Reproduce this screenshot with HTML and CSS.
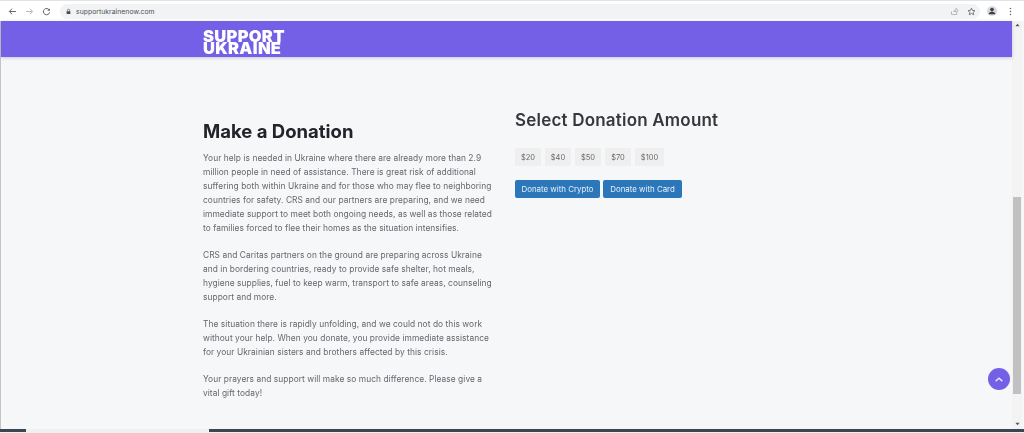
FILE: index.html
```html
<!DOCTYPE html>
<html lang="en">
<head>
<meta charset="utf-8">
<title>Support Ukraine</title>
<link rel="stylesheet" href="styles.css">
</head>
<body>
<div class="window">
  <header class="toolbar">
    <div class="nav-buttons">
      <svg class="tool-icon" viewBox="0 0 12 12"><path d="M10.500 6H2M5.500 2.300L1.800 6l3.700 3.700" fill="none" stroke="#5f6368" stroke-width="1.300"/></svg>
      <svg class="tool-icon" viewBox="0 0 12 12"><path d="M1.500 6H10M6.500 2.300L10.200 6 6.500 9.700" fill="none" stroke="#b4b6b9" stroke-width="1.300"/></svg>
      <svg class="tool-icon" viewBox="0 0 12 12"><path d="M9.800 4.200A4.200 4.200 0 1 0 10.200 7" fill="none" stroke="#5f6368" stroke-width="1.300"/><path d="M10.500 1.500v3.400H7.100z" fill="#5f6368"/></svg>
    </div>
    <div class="omnibox">
      <svg class="lock" viewBox="0 0 8 10"><path d="M1 4.500h6V9H1z" fill="#4a4d51"/><path d="M2.300 4.500V3a1.700 1.700 0 0 1 3.400 0v1.500" fill="none" stroke="#4a4d51" stroke-width="1"/></svg>
      <span class="url">supportukrainenow.com</span>
      <div class="omni-actions">
        <svg class="tool-icon" viewBox="0 0 12 12"><path d="M2 6v4h7V7M5 6.500C5.300 4.500 7 3.500 8 3.500V1.800L11 4.500 8 7V5.300C6.800 5.300 5.800 5.700 5 6.500z" fill="none" stroke="#a0a3a7" stroke-width="1"/></svg>
        <svg class="tool-icon" viewBox="0 0 12 12"><path d="M6 1.500l1.400 3 3.200.4-2.400 2.200.7 3.200L6 8.700l-2.900 1.600.7-3.200L1.400 4.900l3.200-.4z" fill="none" stroke="#5f6368" stroke-width="1.100"/></svg>
      </div>
    </div>
    <div class="profile">
      <svg class="avatar" viewBox="0 0 12 12"><circle cx="6" cy="6" r="6" fill="#d5d8de"/><circle cx="6" cy="4.300" r="2.200" fill="#3c4043"/><path d="M1.800 10c.6-2 2.200-3 4.200-3s3.600 1 4.200 3z" fill="#3c4043"/></svg>
      <svg class="dots" viewBox="0 0 4 12"><circle cx="2" cy="2" r="1" fill="#5f6368"/><circle cx="2" cy="6" r="1" fill="#5f6368"/><circle cx="2" cy="10" r="1" fill="#5f6368"/></svg>
    </div>
  </header>
  <div class="viewport">
    <main class="page">
      <nav class="brand-bar">
        <div class="logo"><span class="logo-line">SUPPORT</span><span class="logo-line">UKRAINE</span></div>
      </nav>
      <section class="content">
        <article class="story">
          <h1>Make a Donation</h1>
          <p>Your help is needed in Ukraine where there are already more than 2.9<br>million people in need of assistance. There is great risk of additional<br>suffering both within Ukraine and for those who may flee to neighboring<br>countries for safety. CRS and our partners are preparing, and we need<br>immediate support to meet both ongoing needs, as well as those related<br>to families forced to flee their homes as the situation intensifies.</p>
          <p>CRS and Caritas partners on the ground are preparing across Ukraine<br>and in bordering countries, ready to provide safe shelter, hot meals,<br>hygiene supplies, fuel to keep warm, transport to safe areas, counseling<br>support and more.</p>
          <p>The situation there is rapidly unfolding, and we could not do this work<br>without your help. When you donate, you provide immediate assistance<br>for your Ukrainian sisters and brothers affected by this crisis.</p>
          <p>Your prayers and support will make so much difference. Please give a<br>vital gift today!</p>
        </article>
        <aside class="donate">
          <h2>Select Donation Amount</h2>
          <div class="amounts">
            <button class="amount">$20</button>
            <button class="amount">$40</button>
            <button class="amount">$50</button>
            <button class="amount">$70</button>
            <button class="amount wide">$100</button>
          </div>
          <div class="actions">
            <button class="cta">Donate with Crypto</button>
            <button class="cta card">Donate with Card</button>
          </div>
        </aside>
      </section>
      <button class="to-top" aria-label="Back to top">
        <svg viewBox="0 0 12 8"><path d="M2 6l4-3.500L10 6" fill="none" stroke="#e6e2fb" stroke-width="1.800"/></svg>
      </button>
    </main>
    <div class="scrollbar">
      <svg class="arrow" viewBox="0 0 6 4"><path d="M3 0.500L5.500 3.500H.5z" fill="#555"/></svg>
      <div class="thumb"></div>
      <svg class="arrow" viewBox="0 0 6 4"><path d="M3 3.500L5.500 .5H.5z" fill="#555"/></svg>
    </div>
  </div>
  <div class="taskbar">
    <div class="task-dark task-a"></div>
    <div class="task-gap"></div>
    <div class="task-dark task-b"></div>
  </div>
</div>
</body>
</html>
```
FILE: styles.css
```css
* { box-sizing: border-box; }
html, body { margin: 0; padding: 0; height: 100%; overflow: hidden; }
body { background: #f6f7f9; font-family: "Inter", "Liberation Sans", sans-serif; }
.window { width: 1024px; height: 433px; display: flex; flex-direction: column; filter: blur(0.6px); }
.toolbar { height: 21px; flex: none; display: flex; align-items: center; background: #fff; padding: 0 0 0 8px; border-top: 1px solid #e2e2e2; }
.nav-buttons { display: flex; gap: 8px; width: 52px; flex: none; }
.tool-icon { width: 9px; height: 9px; display: block; }
.omnibox { flex: 1; height: 15px; background: #f1f3f4; border-radius: 8px; display: flex; align-items: center; padding: 0 4px 0 6px; }
.lock { width: 5px; height: 7px; margin-right: 5px; }
.url { font-size: 6.800px; color: #4d5156; letter-spacing: 0.050px; }
.omni-actions { margin-left: auto; display: flex; gap: 8px; }
.profile { display: flex; align-items: center; gap: 12px; width: 44px; flex: none; padding-left: 7px; }
.avatar { width: 10px; height: 10px; display: block; }
.dots { width: 3px; height: 9px; }
.viewport { flex: 1; min-height: 0; display: flex; border-left: 1px solid #c4c4c4; background: #f6f7f9; }
.page { flex: 1; position: relative; min-width: 0; }
.brand-bar { height: 36px; background: #7360e6; box-shadow: 0 1px 3px rgba(70,60,140,.25); padding-left: 202px; display: flex; align-items: center; }
.logo { display: flex; flex-direction: column; color: #fff; font-family: "Inter", sans-serif; font-weight: 900; font-size: 16.500px; line-height: 12px; letter-spacing: 0.300px; padding-top: 5px; }
.logo-line { display: block; height: 12px; }
.content { display: flex; padding-left: 202px; }
.story { width: 312px; padding-top: 61px; }
h1 { margin: 0 0 7px; font-size: 18.500px; line-height: 26px; font-weight: 700; color: #23232a; }
.story p { margin: 0 0 13px; font-size: 8.400px; line-height: 14px; letter-spacing: 0.055px; color: #66666c; white-space: nowrap; }
.donate { padding-top: 51px; }
h2 { margin: 0 0 16px; font-size: 17px; line-height: 24px; font-weight: 600; color: #37373c; letter-spacing: 0.200px; }
.amounts { display: flex; gap: 4px; margin-bottom: 14px; }
.amount { height: 18px; width: 26px; padding: 0; border: 0; background: #efefef; font: 7.500px "Inter", sans-serif; color: #6a6a6a; border-radius: 1px; }
.amount.wide { width: 29px; }
.actions { display: flex; gap: 3px; }
.cta { height: 18px; width: 85px; padding: 0; border: 0; border-radius: 2px; background: #2c77ba; color: #e8f0f8; font: 7.900px "Inter", sans-serif; }
.cta.card { width: 79px; }
.to-top { position: absolute; right: 2px; bottom: 39px; width: 22px; height: 22px; padding: 0; border: 0; border-radius: 50%; background: #7360e6; display: flex; align-items: center; justify-content: center; }
.to-top svg { width: 10px; height: 7px; }
.scrollbar { width: 10px; margin-right: 2px; flex: none; background: #f3f3f3; display: flex; flex-direction: column; align-items: center; padding: 2px 0 3px; }
.arrow { width: 5px; height: 4px; flex: none; }
.thumb { width: 8px; height: 197px; background: #c1c1c1; margin: auto 0 28px; }
.taskbar { height: 4px; flex: none; display: flex; align-items: flex-start; background: #f0f0f0; }
.task-dark { background: #3c4650; height: 3px; }
.task-a { width: 26px; }
.task-gap { width: 183px; }
.task-b { flex: 1; }
```
